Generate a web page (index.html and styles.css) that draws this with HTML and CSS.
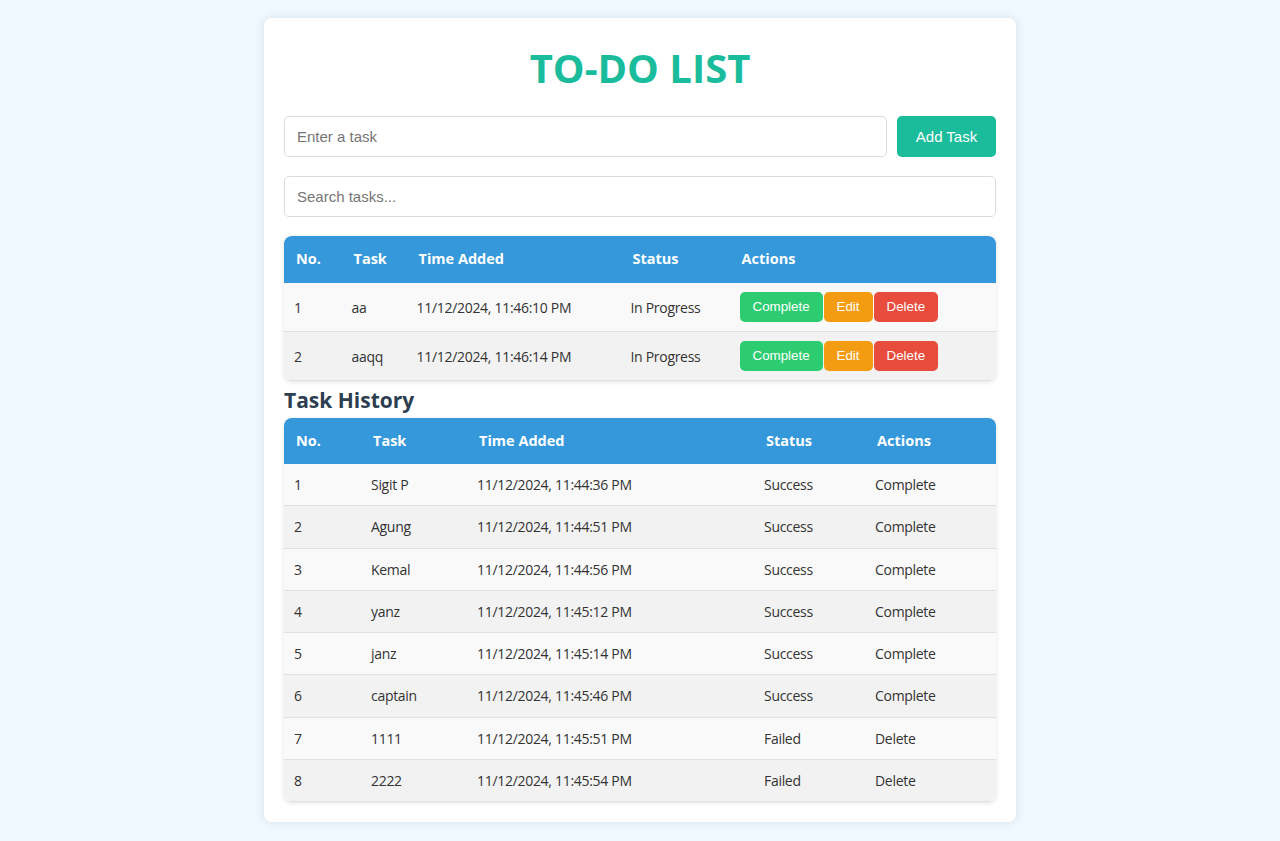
FILE: index.html
```html
<!DOCTYPE html>
<html lang="en">
<head>
<meta charset="utf-8">
<title>To-Do List</title>
<link rel="stylesheet" href="styles.css">
</head>
<body>
<div class="container">
  <h1 class="title">TO-DO LIST</h1>
  <div class="add-row">
    <input class="field task-input" type="text" placeholder="Enter a task">
    <button class="add-btn">Add Task</button>
  </div>
  <input class="field search-input" type="text" placeholder="Search tasks...">

  <div class="table-wrap">
    <table class="tasks active">
      <colgroup>
        <col class="c1"><col class="c2"><col class="c3"><col class="c4"><col class="c5">
      </colgroup>
      <thead>
        <tr><th>No.</th><th>Task</th><th>Time Added</th><th>Status</th><th>Actions</th></tr>
      </thead>
      <tbody>
        <tr>
          <td>1</td><td>aa</td><td>11/12/2024, 11:46:10 PM</td><td>In Progress</td>
          <td><div class="actions"><button class="btn btn-complete">Complete</button><button class="btn btn-edit">Edit</button><button class="btn btn-delete">Delete</button></div></td>
        </tr>
        <tr>
          <td>2</td><td>aaqq</td><td>11/12/2024, 11:46:14 PM</td><td>In Progress</td>
          <td><div class="actions"><button class="btn btn-complete">Complete</button><button class="btn btn-edit">Edit</button><button class="btn btn-delete">Delete</button></div></td>
        </tr>
      </tbody>
    </table>
  </div>

  <h2 class="history-title">Task History</h2>
  <div class="table-wrap">
    <table class="tasks history">
      <colgroup>
        <col class="c1"><col class="c2"><col class="c3"><col class="c4"><col class="c5">
      </colgroup>
      <thead>
        <tr><th>No.</th><th>Task</th><th>Time Added</th><th>Status</th><th>Actions</th></tr>
      </thead>
      <tbody>
        <tr><td>1</td><td>Sigit P</td><td>11/12/2024, 11:44:36 PM</td><td>Success</td><td>Complete</td></tr>
        <tr><td>2</td><td>Agung</td><td>11/12/2024, 11:44:51 PM</td><td>Success</td><td>Complete</td></tr>
        <tr><td>3</td><td>Kemal</td><td>11/12/2024, 11:44:56 PM</td><td>Success</td><td>Complete</td></tr>
        <tr><td>4</td><td>yanz</td><td>11/12/2024, 11:45:12 PM</td><td>Success</td><td>Complete</td></tr>
        <tr><td>5</td><td>janz</td><td>11/12/2024, 11:45:14 PM</td><td>Success</td><td>Complete</td></tr>
        <tr><td>6</td><td>captain</td><td>11/12/2024, 11:45:46 PM</td><td>Success</td><td>Complete</td></tr>
        <tr><td>7</td><td>1111</td><td>11/12/2024, 11:45:51 PM</td><td>Failed</td><td>Delete</td></tr>
        <tr><td>8</td><td>2222</td><td>11/12/2024, 11:45:54 PM</td><td>Failed</td><td>Delete</td></tr>
      </tbody>
    </table>
  </div>
</div>
</body>
</html>
```
FILE: styles.css
```css
* {
  box-sizing: border-box;
}

html {
  background: #f0f8ff;
}

body {
  margin: 0;
  padding: 18px 0;
  background: #f0f8ff;
  font-family: "Open Sans", "Noto Sans", sans-serif;
  color: #333;
}

.container {
  width: 752px;
  margin: 0 auto;
  padding: 20px;
  background: #ffffff;
  border-radius: 8px;
  box-shadow: 0 0 10px rgba(0, 0, 0, 0.1);
}

.title {
  margin: 3px 0 21px;
  font-size: 40px;
  line-height: 54px;
  font-weight: 700;
  letter-spacing: 0;
  text-align: center;
  color: #1abc9c;
}

.add-row {
  display: flex;
  gap: 10px;
  margin-bottom: 19px;
}

.field {
  display: block;
  height: 41px;
  padding: 0 12px;
  border: 1px solid #dcdcdc;
  border-radius: 5px;
  font-family: "Liberation Sans", Arial, sans-serif;
  font-size: 15px;
  color: #333;
  background: #fff;
  outline: none;
}

.field::placeholder {
  color: #757575;
}

.task-input {
  flex: 1;
}

.search-input {
  width: 100%;
  margin-bottom: 19px;
}

.add-btn {
  width: 99px;
  height: 41px;
  padding: 0;
  border: none;
  border-radius: 5px;
  background: #1abc9c;
  color: #fff;
  font-family: "Liberation Sans", Arial, sans-serif;
  font-size: 15px;
}

.table-wrap {
  border-radius: 8px;
  overflow: hidden;
  box-shadow: 0 1px 4px rgba(0, 0, 0, 0.12);
}

.tasks {
  width: 100%;
  border-collapse: collapse;
  table-layout: fixed;
}

.tasks th {
  padding: 12px 12px;
  line-height: 22px;
  background: #3498db;
  color: #fff;
  font-size: 14.5px;
  font-weight: 700;
  text-align: left;
}

.tasks td {
  padding: 10px 10px;
  line-height: 21.25px;
  font-size: 14px;
  letter-spacing: -0.3px;
  color: #333;
  border-bottom: 1px solid #e0e0e0;
  white-space: nowrap;
}

.tasks tbody tr:nth-child(odd) {
  background: #f9f9f9;
}

.tasks tbody tr:nth-child(even) {
  background: #f2f2f2;
}

.active th {
  padding-bottom: 13px;
}

.active td {
  padding-top: 9px;
  padding-bottom: 9px;
  line-height: 21px;
}

.active .c1 { width: 57.5px; }
.active .c2 { width: 65px; }
.active .c3 { width: 214px; }
.active .c4 { width: 109px; }
.active .c5 { width: 266.5px; }

.history .c1 { width: 77px; }
.history .c2 { width: 106px; }
.history .c3 { width: 287px; }
.history .c4 { width: 111px; }
.history .c5 { width: 131px; }

.actions {
  display: flex;
  gap: 1px;
}

.btn {
  height: 30px;
  padding: 0 13px;
  border: none;
  border-radius: 5px;
  color: #fff;
  font-family: "Liberation Sans", Arial, sans-serif;
  font-size: 13.333px;
  letter-spacing: 0;
  line-height: 30px;
}

.btn-complete { background: #2ecc71; }
.btn-edit { background: #f39c12; }
.btn-delete { background: #e74c3c; }

.history-title {
  margin: 4px 0 3px;
  font-size: 21px;
  line-height: 30px;
  font-weight: 700;
  color: #2c3e50;
}
```
